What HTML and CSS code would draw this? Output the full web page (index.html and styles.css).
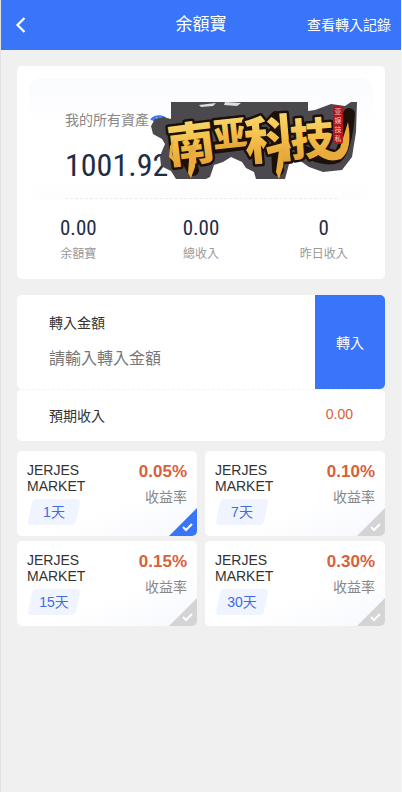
FILE: index.html
```
<!DOCTYPE html>
<html lang="zh-Hant">

<head>
    <meta charset="UTF-8">
    <meta name="viewport" content="width=device-width, initial-scale=1.0">
    <title>余額寶</title>
    <link rel="stylesheet" href="styles.css">
</head>

<body>
    <header class="header">
        <a class="back" href="#" aria-label="返回">
            <svg width="20" height="18" viewBox="0 0 20 18"><path d="M13.5 2 6.5 9l7 7" fill="none" stroke="#fff" stroke-width="2.2"/></svg>
        </a>
        <h1>余額寶</h1>
        <a class="records" href="#">查看轉入記錄</a>
    </header>

    <main class="content">
        <section class="assets">
            <div class="total">
                <div class="total-label">我的所有資產
                    <svg width="20" height="12" viewBox="0 0 20 12"><path d="M2 6C6 1 14 1 18 6M4 7l3-3M8 7l2-4" fill="none" stroke="#3875f8" stroke-width="2"/></svg>
                </div>
                <div class="total-amount">1001.92</div>
            </div>
            <div class="stats">
                <div class="stat"><strong>0.00</strong><span>余額寶</span></div>
                <div class="stat"><strong>0.00</strong><span>總收入</span></div>
                <div class="stat"><strong>0</strong><span>昨日收入</span></div>
            </div>
            <svg class="logo" width="206" height="77" viewBox="0 0 206 77">
                <defs>
                    <linearGradient id="gold" x1="0" y1="0" x2="0" y2="1">
                        <stop offset="0" stop-color="#fbe684"/>
                        <stop offset=".5" stop-color="#f5c04a"/>
                        <stop offset="1" stop-color="#dd9a2e"/>
                    </linearGradient>
                </defs>
                <path d="M20 0H157V9L164 8 180 2 194 4 200 0H206L205 30 201 55 191 68 172 70 158 65 148 58 138 62 134 77H105L103 70 95 66 91 60 80 55 72 60 63 63 59 75 55 77H25L20 69 10 64 9 54 14 42 11 37 2 32 0 24 4 17 12 15 20 17Z" fill="#4b494d"/>
                <path d="M48 3 65 1 62 4 50 5ZM74 0 90 1 86 4 73 3Z" fill="#dedee0"/>
                <path class="shadow" d="M27 42 42 68M61 46 93 42M125 15 127 68M150 48Q174 60 186 55 195 48 198 12"/>
                <g class="logo-text">
                    <text x="40" y="59" font-size="47" transform="rotate(-7 40 42)">南</text>
                    <text x="79" y="44" font-size="34" transform="rotate(-6 79 32)">亚</text>
                    <text x="119" y="56" font-size="51" transform="rotate(-5 119 38)">科</text>
                    <text x="161" y="53" font-size="44" transform="rotate(-4 161 36)">技</text>
                </g>
                <g class="brush">
                    <path d="M39 45 45 44 44 65 40 76 37 71Z"/>
                    <path d="M128 48 134 46 132 65 128 77 125 70Z"/>
                    <path d="M19 44 23 38 21 52 26 63 18 55Z"/>
                    <path d="M164 50Q181 55 189 46L197 20Q202 48 190 57 176 62 164 50Z"/>
                </g>
                <rect x="182" y="4" width="10" height="38" rx="3" fill="#b3131d"/>
                <g class="seal-text">
                    <text x="187" y="12">亚</text>
                    <text x="187" y="21">娱</text>
                    <text x="187" y="30">技</text>
                    <text x="187" y="39">私</text>
                </g>
            </svg>
        </section>

        <form class="transfer">
            <div class="transfer-field">
                <label for="amount">轉入金額</label>
                <input type="text" id="amount" placeholder="請輸入轉入金額">
            </div>
            <button type="button">轉入</button>
        </form>
        <div class="expected">
            <span>預期收入</span>
            <span class="expected-value">0.00</span>
        </div>

        <div class="plans">
            <button class="plan active" type="button">
                <span class="plan-name">JERJES MARKET</span>
                <span class="plan-rate">0.05%</span>
                <span class="plan-days">1天</span>
                <span class="plan-label">收益率</span>
                <svg class="check" width="28" height="28" viewBox="0 0 28 28"><path d="M28 0V28H0Z"/><path class="tick" d="m14 19 3 3 6-6"/></svg>
            </button>
            <button class="plan" type="button">
                <span class="plan-name">JERJES MARKET</span>
                <span class="plan-rate">0.10%</span>
                <span class="plan-days">7天</span>
                <span class="plan-label">收益率</span>
                <svg class="check" width="28" height="28" viewBox="0 0 28 28"><path d="M28 0V28H0Z"/><path class="tick" d="m14 19 3 3 6-6"/></svg>
            </button>
            <button class="plan" type="button">
                <span class="plan-name">JERJES MARKET</span>
                <span class="plan-rate">0.15%</span>
                <span class="plan-days">15天</span>
                <span class="plan-label">收益率</span>
                <svg class="check" width="28" height="28" viewBox="0 0 28 28"><path d="M28 0V28H0Z"/><path class="tick" d="m14 19 3 3 6-6"/></svg>
            </button>
            <button class="plan" type="button">
                <span class="plan-name">JERJES MARKET</span>
                <span class="plan-rate">0.30%</span>
                <span class="plan-days">30天</span>
                <span class="plan-label">收益率</span>
                <svg class="check" width="28" height="28" viewBox="0 0 28 28"><path d="M28 0V28H0Z"/><path class="tick" d="m14 19 3 3 6-6"/></svg>
            </button>
        </div>
    </main>
</body>

</html>
```
FILE: styles.css
```
* {
    box-sizing: border-box;
}

body {
    margin: 0;
    min-height: 100vh;
    border-left: 1px solid #e2e2e2;
    border-right: 1px solid #f7f7f7;
    background: #f0f0f0;
    color: #333;
    font-family: "Liberation Sans", "Noto Sans CJK TC", sans-serif;
    font-size: 14px;
    line-height: 20px;
}

button,
input {
    font-family: inherit;
    border: none;
    padding: 0;
}

.header {
    display: grid;
    grid-template-columns: 1fr auto 1fr;
    align-items: center;
    height: 50px;
    padding: 0 10px;
    background: #3875f8;
    color: #fff;
}

.header h1 {
    margin: 0;
    font-size: 17px;
    font-weight: 400;
}

.header a {
    color: #fff;
    text-decoration: none;
}

.back {
    display: flex;
}

.records {
    text-align: right;
}

.content {
    padding: 16px;
}

.assets {
    position: relative;
    padding: 12px;
    border-radius: 5px;
    background: #fff;
}

.total {
    height: 122px;
    padding: 32px 36px 0;
    border-radius: 12px;
    background: linear-gradient(#fafbfe, #fff 40%, #fff 85%, #fdfdfd);
}

.total-label {
    display: flex;
    align-items: center;
    color: #888;
}

.total-amount {
    margin: 16px 0 0;
    padding-bottom: 14px;
    border-bottom: 1px dashed #eee;
    color: #1f2d45;
    font-family: "Roboto Condensed", "Liberation Sans Narrow", sans-serif;
    font-size: 32px;
    line-height: 38px;
}

.stats {
    display: grid;
    grid-template-columns: repeat(3, 1fr);
    margin: 0 -12px;
    padding: 16px 0 3px;
    text-align: center;
}

.stat strong {
    display: block;
    color: #1f2d45;
    font-family: "Roboto Condensed", "Liberation Sans Narrow", sans-serif;
    font-size: 21px;
    font-weight: 400;
    line-height: 24px;
}

.stat span {
    display: block;
    padding-top: 4px;
    color: #999;
    font-size: 12px;
    line-height: 20px;
}

.logo {
    position: absolute;
    top: 36px;
    left: 134px;
    overflow: visible;
}

.logo-text {
    fill: url(#gold);
    stroke: #1b100a;
    stroke-width: 5;
    stroke-linejoin: round;
    paint-order: stroke;
    font-family: "Noto Sans CJK SC", sans-serif;
    font-weight: 900;
    text-anchor: middle;
}

.brush {
    fill: #e9ab3c;
}

.shadow {
    fill: none;
    stroke: #1b100a;
    stroke-width: 12;
    stroke-linejoin: round;
    stroke-linecap: round;
}

.seal-text {
    fill: #f3c9b8;
    font-family: "Noto Sans CJK SC", sans-serif;
    font-size: 7px;
    text-anchor: middle;
}

.transfer {
    display: flex;
    height: 94px;
    margin-top: 16px;
    border-radius: 5px;
    background: #fff;
    overflow: hidden;
}

.transfer-field {
    flex: 1;
    min-width: 0;
    padding: 18px 0 0 32px;
}

.transfer-field label {
    display: block;
}

.transfer-field input {
    width: 100%;
    height: 24px;
    margin-top: 14px;
    background: none;
    color: #333;
    font-size: 16px;
}

.transfer-field input::placeholder {
    color: #777;
}

.transfer button {
    width: 70px;
    background: #3875f8;
    color: #fff;
    font-size: 14px;
}

.expected {
    display: flex;
    justify-content: space-between;
    padding: 16px 32px 15px;
    border-top: 1px dashed #f3f3f3;
    border-radius: 5px;
    background: #fff;
}

.expected-value {
    color: #d9603b;
    line-height: 16px;
}

.plans {
    display: grid;
    grid-template-columns: 1fr 1fr;
    gap: 5px 8px;
    margin-top: 10px;
}

.plan {
    position: relative;
    display: grid;
    grid-template-columns: 1fr auto;
    align-content: start;
    height: 85px;
    padding: 11px 10px;
    border-radius: 5px;
    background: linear-gradient(160deg, #fff 60%, #f6f8fe);
    color: #333;
    font-size: 14px;
    text-align: left;
    overflow: hidden;
}

.plan-name {
    width: 64px;
    grid-row: span 2;
    line-height: 16px;
}

.plan-rate {
    color: #d9603b;
    font-size: 17px;
    font-weight: 700;
    line-height: 20px;
    text-align: right;
}

.plan-label {
    grid-column: 2;
    grid-row: 2 / span 2;
    padding-top: 4px;
    color: #888;
    line-height: 22px;
    text-align: right;
}

.plan-days {
    position: relative;
    z-index: 0;
    grid-row: 3;
    justify-self: start;
    width: 48px;
    margin: 5px 0 0 3px;
    color: #3d6be0;
    line-height: 26px;
    text-align: center;
}

.plan-days::before {
    content: "";
    position: absolute;
    inset: 0;
    z-index: -1;
    border-radius: 4px;
    background: #f0f4ff;
    transform: skewX(-12deg);
}

.check {
    position: absolute;
    right: 0;
    bottom: 0;
    fill: #d4d4d4;
}

.active .check {
    fill: #3875f8;
}

.check .tick {
    fill: none;
    stroke: #fff;
    stroke-width: 2;
}
```
